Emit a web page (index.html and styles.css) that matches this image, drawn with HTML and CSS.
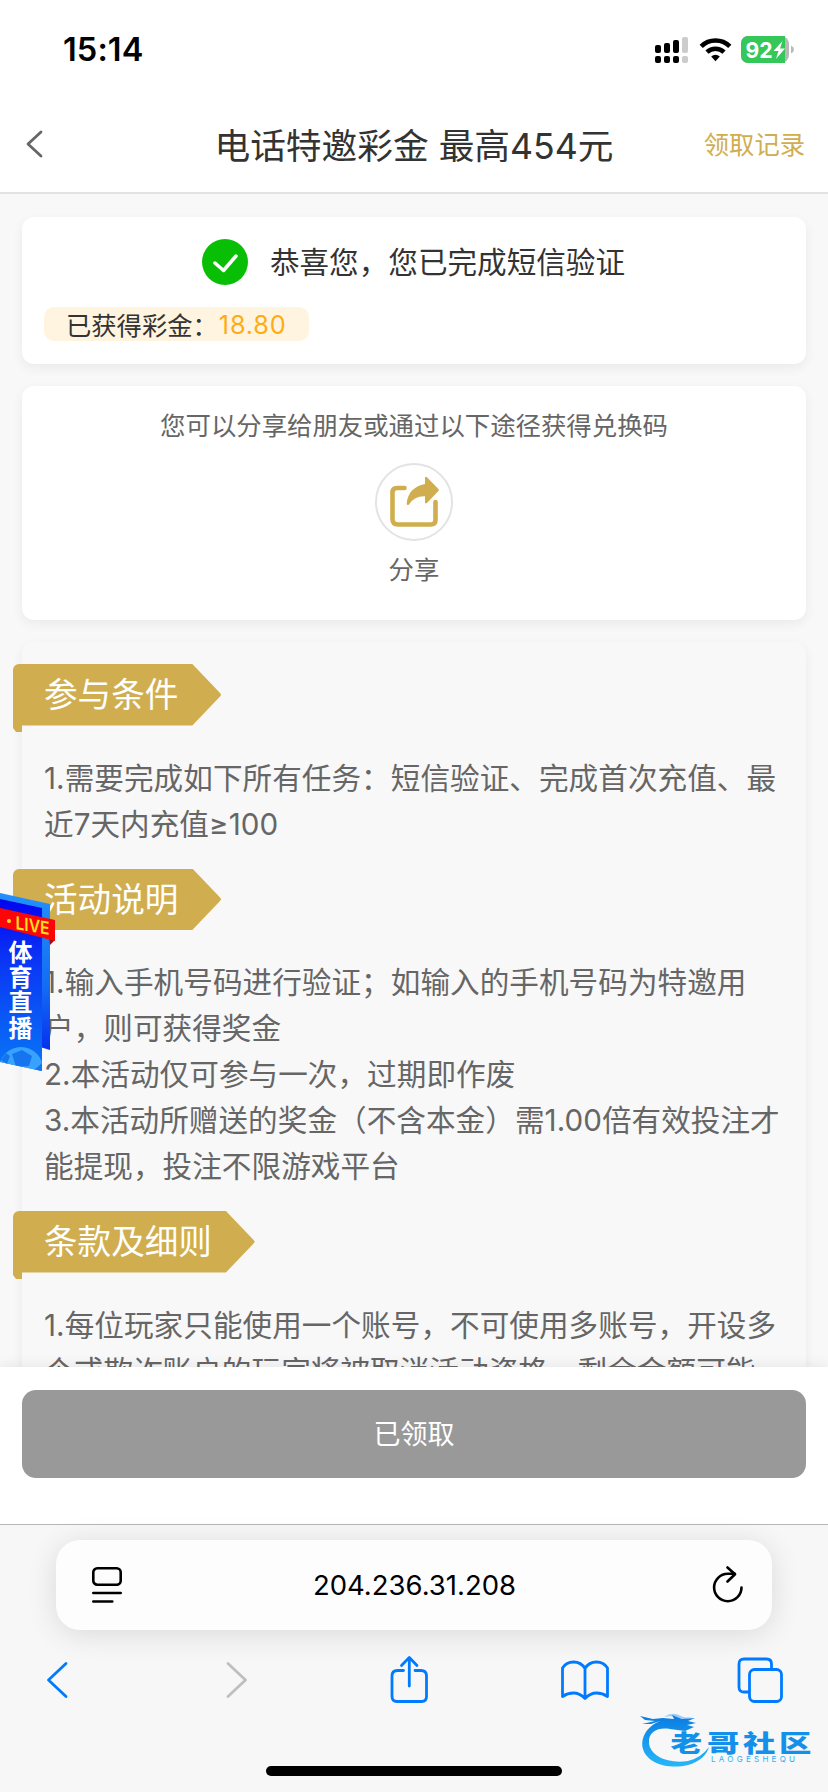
FILE: index.html
```
<!DOCTYPE html>
<html lang="zh-CN">
<head>
<meta charset="utf-8">
<title>电话特邀彩金</title>
<link rel="stylesheet" href="styles.css">
</head>
<body>
<div class="status">
  <span class="time">15:14</span>
  <svg class="status-icons" width="150" height="40" viewBox="650 30 150 40">
    <g fill="#000">
      <rect x="655" y="45" width="6" height="8" rx="2"/><rect x="664" y="43" width="6" height="10" rx="2"/><rect x="673" y="40" width="6" height="13" rx="2"/>
      <rect x="655" y="56" width="6" height="7" rx="2"/><rect x="664" y="56" width="6" height="7" rx="2"/><rect x="673" y="56" width="6" height="7" rx="2"/>
    </g>
    <g fill="#ccc"><rect x="682" y="37" width="6" height="16" rx="2"/><rect x="682" y="56" width="6" height="7" rx="2"/></g>
    <g fill="none" stroke="#000" stroke-width="4.6">
      <path d="M701.2 46.3a20.5 20.5 0 0 1 28.6 0"/><path d="M707 52.2a12.2 12.2 0 0 1 17 0"/>
    </g>
    <path d="M711.2 56.6a6.2 6.2 0 0 1 8.6 0l-4.3 4.6z"/>
    <path d="M748 36h33a8 8 0 0 1 8 8v11a8 8 0 0 1-8 8h-33a7 7 0 0 1-7-7V43a7 7 0 0 1 7-7z" fill="#b9b9b9"/>
    <path d="M748 36h37v27h-37a7 7 0 0 1-7-7V43a7 7 0 0 1 7-7z" fill="#35c759"/>
    <path d="M791 45.500q3 1.500 3 4t-3 4z" fill="#b9b9b9"/>
    <text x="745.500" y="58" class="battery" textLength="27" lengthAdjust="spacingAndGlyphs">92</text>
    <path d="M782.500 41l-9 10h5l-2.500 8 9-10.500h-5z" fill="#fff"/>
  </svg>
</div>
<header class="header">
  <svg class="back" width="20" height="30" viewBox="0 0 20 30"><path d="M16 3L3 15l13 12" /></svg>
  <h1 class="title">电话特邀彩金 最高454元</h1>
  <a class="record">领取记录</a>
</header>
<main class="content">
  <section class="card done">
    <div class="congrats">
      <svg width="46" height="46" viewBox="0 0 46 46"><circle cx="23" cy="23" r="23" fill="#09bf05"/><path d="M13 24l8.500 7.500L34 17" fill="none" stroke="#fff" stroke-width="3.500" stroke-linecap="round" stroke-linejoin="round"/></svg>
      <span>恭喜您，您已完成短信验证</span>
    </div>
    <div class="bonus">已获得彩金：<b>18.80</b></div>
  </section>
  <section class="card share">
    <p>您可以分享给朋友或通过以下途径获得兑换码</p>
    <div class="share-ring">
      <svg width="50" height="52" viewBox="0 0 50 52"><path d="M15.500 12H8Q3.500 12 3.500 16.500V43q0 5.500 5.500 5.500h33q4.500 0 4.500-4.500V26" fill="none" stroke="#d0ae50" stroke-width="4.600" stroke-linecap="round"/><path d="M36 1.200q1-.8 2 .1l11.400 11.700q.9 1 0 2L38 27q-1.200 1-2-.2v-6.600q-10.500-.4-16 8.200-2 1.600-2.300-.9Q19 11.500 36 8z" fill="#d0ae50"/></svg>
    </div>
    <span>分享</span>
  </section>
  <section class="card rules">
    <h2 class="tag">参与条件</h2>
    <div class="text">1.需要完成如下所有任务：短信验证、完成首次充值、最<br>近7天内充值≥100</div>
    <h2 class="tag">活动说明</h2>
    <div class="text">1.输入手机号码进行验证；如输入的手机号码为特邀用<br>户，则可获得奖金<br>2.本活动仅可参与一次，过期即作废<br>3.本活动所赠送的奖金（不含本金）需1.00倍有效投注才<br>能提现，投注不限游戏平台</div>
    <h2 class="tag">条款及细则</h2>
    <div class="text">1.每位玩家只能使用一个账号，不可使用多账号，开设多<br>个或欺诈账户的玩家将被取消活动资格，剩余金额可能</div>
  </section>
</main>
<footer class="claim"><button class="claim-btn">已领取</button></footer>
<nav class="browser">
  <div class="url">
    <svg width="32" height="38" viewBox="0 0 32 38"><g fill="none" stroke="#000" stroke-width="2.600" stroke-linecap="round"><rect x="2.300" y="2.300" width="27.400" height="16.400" rx="4"/><path d="M2.300 27h27.400M2.300 35.500h19"/></g></svg>
    <span class="ip">204.236.31.208</span>
    <svg width="32" height="38" viewBox="0 0 32 38"><g fill="none" stroke="#000" stroke-width="2.600" stroke-linecap="round" stroke-linejoin="round"><path d="M29.500 21.500A13.700 13.700 0 1 1 15.800 7.800h7"/><path d="M15.500 1.500l7.500 6.700-7.500 7.300"/></g></svg>
  </div>
  <div class="tools">
    <svg width="26" height="40" viewBox="0 0 26 40"><path d="M21 3.500L3.500 20 21 36.500"/></svg>
    <svg class="off" width="26" height="40" viewBox="0 0 26 40"><path d="M5 3.500L22.500 20 5 36.500"/></svg>
    <svg width="42" height="50" viewBox="0 0 42 50"><path d="M15.500 15.500H9.500Q4 15.500 4 21V41.500q0 5 5 5h24.500q5 0 5-5V21q0-5.500-5.500-5.500H27M21.300 31V3M13.500 10.500L21.300 2.500l7.700 8"/></svg>
    <svg width="50" height="42" viewBox="0 0 50 42"><path d="M25 9.500C22 4.500 18 3 13.500 3S5 5 2.500 9v28.500q5-3.500 11-3.500T25 39.500V9.500C28 4.500 32 3 36.500 3S45 5 47.500 9v28.500q-5-3.500-11-3.500T25 39.500"/></svg>
    <svg width="48" height="48" viewBox="0 0 48 48"><path d="M12.500 36H8q-5 0-5-5V8q0-5 5-5h22.500q5 0 5 5v5"/><rect x="13.500" y="13.500" width="32" height="32" rx="5"/></svg>
  </div>
  <div class="home"></div>
</nav>

<svg class="live" width="56" height="184" viewBox="0 890 56 184">
  <defs>
    <linearGradient id="front" x1="0" y1="0" x2="0" y2="1"><stop offset="0" stop-color="#0204ef"/><stop offset=".35" stop-color="#0a35f5"/><stop offset="1" stop-color="#0877f6"/></linearGradient>
    <linearGradient id="side" x1="0" y1="0" x2="0" y2="1"><stop offset="0" stop-color="#2390fa"/><stop offset=".6" stop-color="#146cf4"/><stop offset="1" stop-color="#0730ee"/></linearGradient>
    <clipPath id="panel"><path d="M0 899l42 9v163l-42-9z"/></clipPath>
  </defs>
  <path d="M0 893l50 11v146l-10-3V908L0 900z" fill="url(#side)"/>
  <path d="M0 899l42 9v163l-42-9z" fill="url(#front)"/>
  <g clip-path="url(#panel)">
    <circle cx="21" cy="1069" r="22" fill="#38a3ff"/>
    <path d="M12 1054l10-4 10 6-3 10-13 1zM1 1060l5-7 4 3-3 8zM33 1071l9-8v10z" fill="#1675ee"/>
  </g>
  <path d="M49 938l6 2-5 5z" fill="#a80d12"/>
  <path d="M0 908l55 12v21l-55-14z" fill="#fb0509"/>
  <circle cx="9" cy="921" r="2" fill="#ffe11d"/>
  <text class="live-word" transform="translate(15.500 929) skewY(10)" textLength="34" lengthAdjust="spacingAndGlyphs">LIVE</text>
  <g class="live-cn"><text x="8.500" y="960.500">体</text><text x="8.500" y="985.500">育</text><text x="8.500" y="1011">直</text><text x="8.500" y="1036.500">播</text></g>
</svg>

<svg class="logo" width="184" height="64" viewBox="636 1708 184 64">
  <defs><linearGradient id="lg" gradientUnits="userSpaceOnUse" x1="0" y1="1716" x2="0" y2="1766"><stop offset="0" stop-color="#0b7de2"/><stop offset="1" stop-color="#25b6fa"/></linearGradient></defs>
  <g fill="url(#lg)">
    <path d="M663 1720C647 1725 640 1738 643 1749C647 1763 668 1770 688 1765Q705 1760 709 1747Q701 1758 688 1761C668 1764 650 1756 649 1743C648 1731 659 1727 670 1729L685 1731L694 1727L687 1725L696 1723L688 1721L695 1718L682 1719L672 1715L674 1719L663 1718L653 1719L640 1716L645 1720L655 1721L642 1724L651 1724z"/>
    <path d="M664 1717q8-6 17-1q6 3 13 0q-8 5-15 2t-15-1z" opacity=".35"/>
    <g class="logo-cn"><text transform="translate(670.500 1751.500) scale(1.320 1)">老</text><text transform="translate(707 1751.500) scale(1.350 1)">哥</text><text transform="translate(743 1751.500) scale(1.350 1)">社</text><text transform="translate(779 1751.500) scale(1.350 1)">区</text></g>
    <text class="logo-en" x="711" y="1761.700" textLength="84">LAOGESHEQU</text>
  </g>
</svg>
</body>
</html>
```
FILE: styles.css
```
* { box-sizing: border-box; }
body {
  margin: 0; width: 828px; height: 1792px; overflow: hidden; position: relative;
  display: flex; flex-direction: column; background: #f8f8f8; color: #333;
  font-family: Inter, "Noto Sans CJK SC", sans-serif;
}
h1, h2, p { margin: 0; font-weight: 400; }
.status { height: 98px; flex: none; background: #fff; display: flex; justify-content: space-between; padding: 30px 28px 0 63px; }
.time { font-size: 32.500px; line-height: 40px; font-weight: 600; color: #000; letter-spacing: .1px; }
.battery { font: 700 22px Inter, sans-serif; fill: #fff; }
.header { height: 96px; flex: none; background: #fff; border-bottom: 2px solid #e2e2e2; display: grid; grid-template-columns: 160px 1fr 160px; align-items: center; padding: 0 23px 2px 25px; }
.back path { fill: none; stroke: #666; stroke-width: 2.8; stroke-linecap: round; stroke-linejoin: round; }
.title { font-size: 35.700px; line-height: 50px; padding-top: 3px; margin: 0 -9px 0 -11px; text-align: center; white-space: nowrap; }
.record { font-size: 25.300px; line-height: 36px; padding-top: 2px; color: #d0ae50; text-align: right; }
.content { flex: none; height: 1173px; overflow: hidden; padding: 23px 22px 0; display: flex; flex-direction: column; gap: 22px; }
.card { flex: none; background: #fff; border-radius: 12px; box-shadow: 0 4px 12px rgba(0, 0, 0, .06); }
.done { height: 147px; padding: 22px; }
.congrats { display: flex; justify-content: center; align-items: center; gap: 22px; height: 46px; font-size: 29.600px; line-height: 44px; padding-right: 1px; }
.bonus { display: inline-flex; align-items: center; margin-top: 22px; height: 34px; padding: 0 22px; background: #fff4e0; border-radius: 10px; font-size: 25.300px; }
.bonus b { font-weight: 400; color: #ffab15; letter-spacing: .8px; padding-left: 1px; }
.share { height: 234px; padding-top: 21px; display: flex; flex-direction: column; align-items: center; color: #666; font-size: 25.400px; line-height: 37px; }
.share-ring { width: 78px; height: 78px; margin: 19px 0 10px; border: 2px solid #e3e3e3; border-radius: 50%; display: flex; align-items: center; justify-content: center; }
.rules { background: #f8f8f8; height: 900px; padding-top: 22px; }
.tag { position: relative; width: max-content; height: 61.500px; line-height: 61px; margin-left: -9px; padding: 0 43px 0 31px; font-size: 33.600px; color: #fff; background: #d0ae50; border-radius: 6px 0 0 0; clip-path: polygon(0 0, calc(100% - 29px) 0, calc(100% - 2px) 46%, 100% 50%, calc(100% - 2px) 54%, calc(100% - 29px) 100%, 9px 100%, 9px 69px, 3px 68px, 0 64px); }
.tag::before { content: ""; position: absolute; left: 0; top: 60px; width: 9px; height: 8px; background: #d0ae50; }
.text { padding: 29px 0 22px 22px; font-size: 29.600px; line-height: 46px; letter-spacing: .05px; color: #666; white-space: nowrap; }
.claim { position: relative; height: 157px; flex: none; background: #fff; padding: 23px 22px; box-shadow: 0 -2px 12px rgba(0, 0, 0, .07); }
.claim-btn { display: block; width: 100%; height: 88px; border: 0; border-radius: 14px; background: #999; color: #fff; font: 400 27px "Noto Sans CJK SC", sans-serif; padding: 0 0 4px; }
.browser { position: relative; height: 268px; flex: none; background: #f7f7f7; border-top: 1px solid #b7b7b7; padding-top: 15px; display: flex; flex-direction: column; align-items: center; }
.url { width: 716px; height: 90px; border-radius: 24px; background: #fdfdfd; box-shadow: 0 4px 30px rgba(0, 0, 0, .12); display: flex; align-items: center; justify-content: space-between; padding: 0 28px 0 35px; }
.ip { font-size: 27.500px; color: #000; padding-right: 6px; }
.tools { height: 50px; margin-top: 25px; display: grid; grid-template-columns: 178px 165px 172px 176px 48px; align-items: center; }
.tools svg { fill: none; stroke: #007aff; stroke-width: 2.8; stroke-linecap: round; stroke-linejoin: round; }
.tools .off { stroke: #bfbfbf; }
.home { width: 296px; height: 10px; margin-top: 61px; border-radius: 5px; background: #000; }
.live { position: absolute; left: 0; top: 890px; }
.live-word { font: 600 18px Inter, sans-serif; fill: #ffe11d; }
.live-cn { font: 700 24px "Noto Sans CJK SC", sans-serif; fill: #fff; }
.logo { position: absolute; left: 636px; top: 1708px; }
.logo-cn { font: 900 24px "Noto Sans CJK SC", sans-serif; fill: #1390ea; }
.logo-en { font: 400 8px Inter, sans-serif; }
```
